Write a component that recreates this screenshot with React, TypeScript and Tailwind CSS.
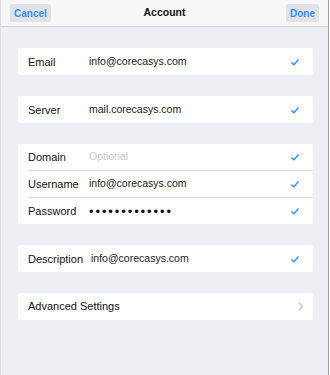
import React from 'react';

const Check = () => (
    <svg width="8" height="7" viewBox="0 0 8 7" className="shrink-0">
        <path d="M0.8 3.9 L2.9 5.8 L7.2 0.9" fill="none" stroke="#2f8ef2" strokeWidth="1.4" strokeLinecap="round" strokeLinejoin="round" />
    </svg>
);

const Chevron = () => (
    <svg width="6" height="9" viewBox="0 0 6 9" className="shrink-0">
        <path d="M1.2 1 L4.6 4.5 L1.2 8" fill="none" stroke="#c4c4c9" strokeWidth="1.3" strokeLinecap="round" strokeLinejoin="round" />
    </svg>
);

function Row({ label, value, placeholder, dots, wide }: { label: string; value?: string; placeholder?: string; dots?: boolean; wide?: boolean }) {
    return (
        <div className="flex items-center h-[26px] pl-[10px] pr-[14px]">
            <span className={wide ? "mr-[8px] text-[11px] text-[#111]" : "min-w-[61px] text-[11px] text-[#111]"}>{label}</span>
            {dots ? (
                <span className="flex-1 text-[13px] leading-none tracking-[1.9px] text-[#111]">•••••••••••••</span>
            ) : value ? (
                <span className="flex-1 text-[10.5px] text-[#1a1a1a]">{value}</span>
            ) : (
                <span className="flex-1 text-[10.5px] text-[#c8c8ce]">{placeholder}</span>
            )}
            <Check />
        </div>
    );
}

function Card({ children }: { children: React.ReactNode }) {
    return <div className="ml-[17px] w-[295px] bg-white rounded-[3px] flex flex-col">{children}</div>;
}

export default function App() {
    return (
        <div className="w-[330px] h-[375px] bg-white">
            <div className="w-[329px] h-[375px] bg-[#eeeff4] border-r border-[#a3a3a6] border-l border-l-[#dcdde2] font-['Liberation_Sans',Arial,sans-serif] flex flex-col">
                <div className="h-[27px] shrink-0 bg-[#f7f7f7] border-b border-[#cfcfd2] grid grid-cols-[1fr_auto_1fr] items-center pl-[9px] pr-[9px]">
                    <div className="flex">
                        <button className="h-[18px] px-[4px] bg-[#e2e2e4] rounded-[2px] text-[10px] font-bold text-[#2f8ef2]">Cancel</button>
                    </div>
                    <span className="text-[10.5px] font-bold text-[#111]">Account</span>
                    <div className="flex justify-end">
                        <button className="h-[18px] px-[4px] bg-[#e2e2e4] rounded-[2px] text-[10px] font-bold text-[#2f8ef2]">Done</button>
                    </div>
                </div>

                <div className="flex flex-col pt-[21px] gap-[21px]">
                    <Card>
                        <div className="h-[1px]" />
                        <Row label="Email" value="info@corecasys.com" />
                    </Card>
                    <Card>
                        <div className="h-[1px]" />
                        <Row label="Server" value="mail.corecasys.com" />
                    </Card>
                    <Card>
                        <Row label="Domain" placeholder="Optional" />
                        <div className="ml-[10px] h-[1px] bg-[#dcdce0]" />
                        <Row label="Username" value="info@corecasys.com" />
                        <div className="ml-[10px] h-[1px] bg-[#dcdce0]" />
                        <Row label="Password" dots />
                    </Card>
                    <Card>
                        <div className="h-[1px]" />
                        <Row label="Description" value="info@corecasys.com" wide />
                    </Card>
                    <Card>
                        <div className="flex items-center h-[27px] pl-[10px] pr-[9px]">
                            <span className="flex-1 text-[11px] text-[#111]">Advanced Settings</span>
                            <Chevron />
                        </div>
                    </Card>
                </div>
            </div>
        </div>
    );
}
